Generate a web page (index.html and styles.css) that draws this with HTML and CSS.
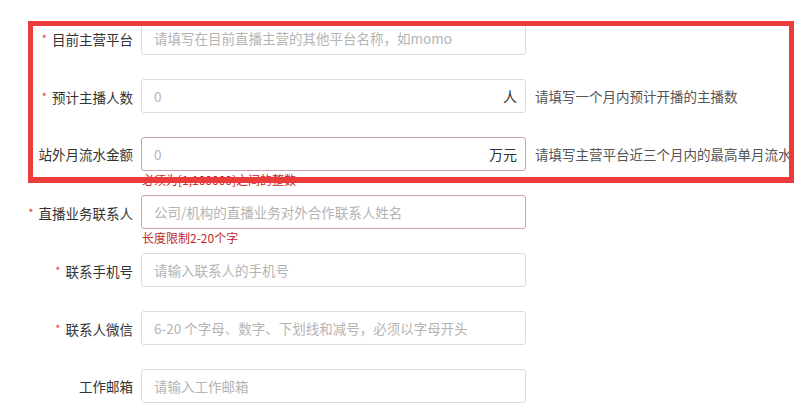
FILE: index.html
```html
<!DOCTYPE html>
<html lang="zh-CN">
<head>
    <meta charset="UTF-8">
    <meta name="viewport" content="width=device-width, initial-scale=1.0">
    <title>直播平台入驻信息</title>
    <link rel="stylesheet" href="styles.css">
</head>
<body>
    <div class="page">
        <form class="form">
            <div class="row">
                <label class="label"><span class="req">*</span>目前主营平台</label>
                <div class="field">
                    <div class="input-box">
                        <input type="text" placeholder="请填写在目前直播主营的其他平台名称，如momo">
                    </div>
                </div>
            </div>

            <div class="row">
                <label class="label"><span class="req">*</span>预计主播人数</label>
                <div class="field">
                    <div class="input-box">
                        <input type="text" placeholder="0">
                        <span class="suffix">人</span>
                    </div>
                </div>
                <div class="help">请填写一个月内预计开播的主播数</div>
            </div>

            <div class="row">
                <label class="label">站外月流水金额</label>
                <div class="field">
                    <div class="input-box error">
                        <input type="text" placeholder="0">
                        <span class="suffix">万元</span>
                    </div>
                    <div class="error-msg">必须为[1,100000]之间的整数</div>
                </div>
                <div class="help">请填写主营平台近三个月内的最高单月流水</div>
            </div>

            <div class="row">
                <label class="label"><span class="req">*</span>直播业务联系人</label>
                <div class="field">
                    <div class="input-box error">
                        <input type="text" placeholder="公司/机构的直播业务对外合作联系人姓名">
                    </div>
                    <div class="error-msg">长度限制2-20个字</div>
                </div>
            </div>

            <div class="row">
                <label class="label"><span class="req">*</span>联系手机号</label>
                <div class="field">
                    <div class="input-box">
                        <input type="text" placeholder="请输入联系人的手机号">
                    </div>
                </div>
            </div>

            <div class="row">
                <label class="label"><span class="req">*</span>联系人微信</label>
                <div class="field">
                    <div class="input-box">
                        <input type="text" placeholder="6-20 个字母、数字、下划线和减号，必须以字母开头">
                    </div>
                </div>
            </div>

            <div class="row">
                <label class="label">工作邮箱</label>
                <div class="field">
                    <div class="input-box">
                        <input type="text" placeholder="请输入工作邮箱">
                    </div>
                </div>
            </div>
        </form>

        <!-- annotation frame drawn over the first three rows -->
        <div class="highlight"></div>
    </div>
</body>
</html>
```

FILE: styles.css
```css
body {
    margin: 0;
    background: #fff;
    font-family: "Noto Sans CJK SC", "Noto Sans", sans-serif;
    color: #333;
}
.page {
    position: relative;
    width: 800px;
    height: 414px;
    overflow: hidden;
}
.form {
    padding-top: 21px;
}
.row {
    display: grid;
    grid-template-columns: 141px 385px auto;
    height: 58px;
    align-items: start;
}
.label {
    padding-right: 8px;
    line-height: 34px;
    font-size: 13.5px;
    text-align: right;
    color: #333;
    white-space: nowrap;
}
.req {
    color: #e4393c;
    font-size: 11px;
    margin-right: 5px;
    vertical-align: 2px;
}
.field {
    display: flex;
    flex-direction: column;
}
.input-box {
    display: flex;
    align-items: center;
    height: 34px;
    box-sizing: border-box;
    border: 1px solid #dcdcdc;
    border-radius: 3px;
    background: #fff;
}
.input-box.error {
    border-color: #c9a3a6;
}
.input-box input {
    flex: 1;
    min-width: 0;
    height: 100%;
    border: none;
    outline: none;
    padding: 0 12px;
    background: transparent;
    font-family: inherit;
    font-size: 13.5px;
    color: #333;
}
.input-box input::placeholder {
    color: #b4b4b4;
}
.suffix {
    padding-right: 8px;
    font-size: 14px;
    color: #333;
}
.error-msg {
    line-height: 18px;
    font-size: 12px;
    color: #c0282d;
    padding-left: 1px;
}
.help {
    margin-left: 9px;
    line-height: 34px;
    font-size: 13.5px;
    color: #555;
    white-space: nowrap;
}
.highlight {
    position: absolute;
    left: 28px;
    top: 21px;
    width: 766px;
    height: 162px;
    box-sizing: border-box;
    border: 5px solid #ec3b3b;
    border-bottom-width: 6px;
    pointer-events: none;
}
```
